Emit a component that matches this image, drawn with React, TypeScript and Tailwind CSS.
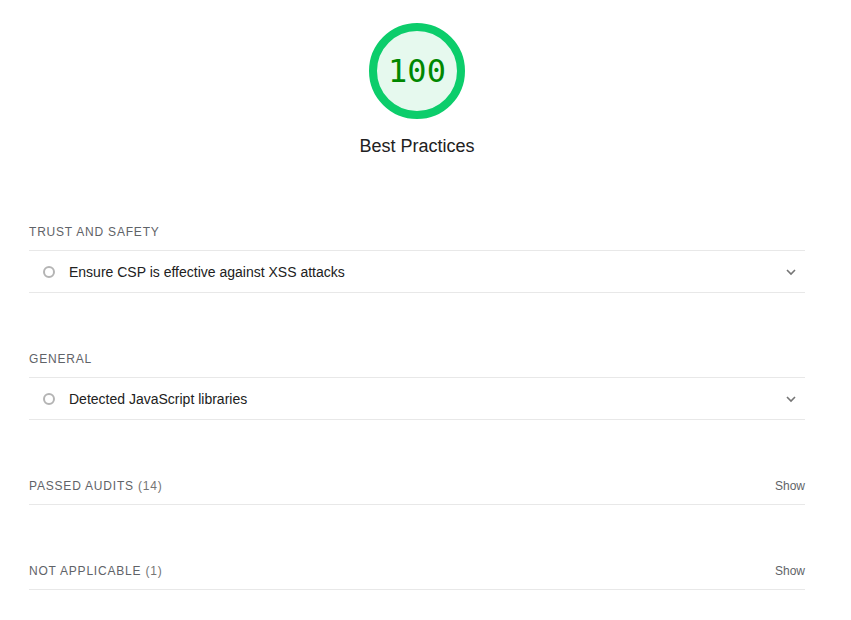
import React from 'react';

interface Audit {
  title: string;
}

interface Group {
  title: string;
  audits: Audit[];
}

const groups: Group[] = [
  { title: 'Trust and Safety', audits: [{ title: 'Ensure CSP is effective against XSS attacks' }] },
  { title: 'General', audits: [{ title: 'Detected JavaScript libraries' }] },
];

const Gauge: React.FC<{ score: number; label: string }> = ({ score, label }) => (
  <div className="flex flex-col items-center">
    <div className="relative w-[96px] h-[96px]">
      <svg width="96" height="96" viewBox="0 0 96 96">
        <circle cx="48" cy="48" r="44" fill="#e6f9ee" stroke="#0ccd6b" strokeWidth="8" />
      </svg>
      <div className="absolute inset-0 flex items-center justify-center text-[32px] text-[#008800] font-['DejaVu_Sans_Mono',monospace]">
        {score}
      </div>
    </div>
    <div className="mt-[16px] text-[18px] leading-[22px] text-[#212121]">{label}</div>
  </div>
);

const ChevronDown = () => (
  <svg width="12" height="12" viewBox="0 0 12 12" fill="none">
    <path d="M2 4l4 4 4-4" stroke="#757575" strokeWidth="1.6" />
  </svg>
);

const AuditGroup: React.FC<{ group: Group }> = ({ group }) => (
  <div>
    <div className="text-[12px] leading-[16px] uppercase tracking-[0.8px] text-[#5f6368] pb-[10px] border-b border-[#e8e8e8]">
      {group.title}
    </div>
    {group.audits.map(a => (
      <div key={a.title} className="flex items-center h-[42px] pt-px border-b border-[#e8e8e8] pl-[14px] pr-[8px]">
        <span className="w-[12px] h-[12px] rounded-full border-2 border-[#b4b4b4]" />
        <span className="ml-[14px] flex-1 text-[14px] text-[#212121]">{a.title}</span>
        <ChevronDown />
      </div>
    ))}
  </div>
);

const Clump: React.FC<{ title: string; count: number }> = ({ title, count }) => (
  <div className="flex items-center justify-between pb-[10px] border-b border-[#e8e8e8]">
    <div className="text-[12px] leading-[16px] uppercase tracking-[0.8px] text-[#5f6368]">
      {title} <span className="text-[#757575]">({count})</span>
    </div>
    <div className="text-[12px] leading-[16px] text-[#5f6368]">Show</div>
  </div>
);

const App: React.FC = () => {
  return (
    <div className="min-h-[620px] bg-white pl-[29px] pr-[46px] pt-[23px] font-['Liberation_Sans',Arial,sans-serif]">
      <Gauge score={100} label="Best Practices" />
      <div className="mt-[67px] flex flex-col gap-[58px]">
        {groups.map(g => (
          <AuditGroup key={g.title} group={g} />
        ))}
        <Clump title="Passed audits" count={14} />
        <Clump title="Not applicable" count={1} />
      </div>
    </div>
  );
};

export default App;
